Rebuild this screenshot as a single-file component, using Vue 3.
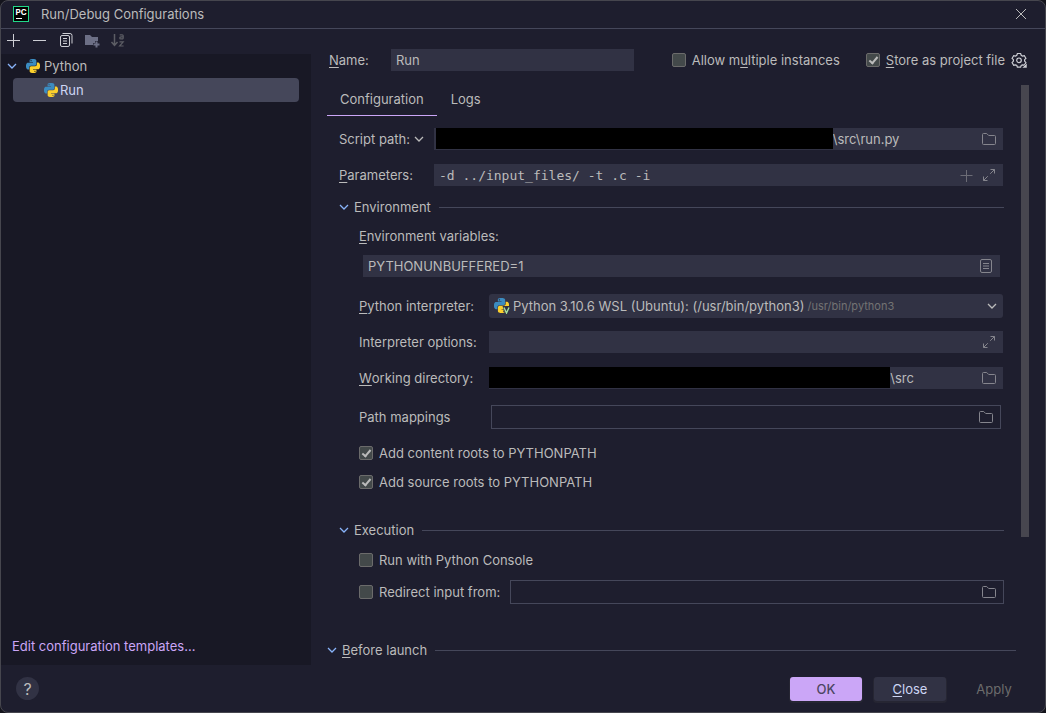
<script setup>
import { ref } from 'vue'

const name = ref('Run')
const tab = ref('Configuration')
const tabs = ['Configuration', 'Logs']
const scriptPath = ref('\\src\\run.py')
const parameters = ref('-d ../input_files/ -t .c -i')
const envVars = ref('PYTHONUNBUFFERED=1')
const interpreterOptions = ref('')
const workingDir = ref('\\src')
const pathMappings = ref('')
const redirectFile = ref('')
const allowMultiple = ref(false)
const storeAsFile = ref(true)
const contentRoots = ref(true)
const sourceRoots = ref(true)
const pythonConsole = ref(false)
const redirectInput = ref(false)
</script>

<template>
  <svg class="symbols" aria-hidden="true">
    <symbol id="python" viewBox="0 0 24 24">
      <path class="py-blue" d="M14.25.18l.9.2.73.26.59.3.45.32.34.34.25.34.16.33.1.3.04.26.02.2-.01.13V8.5l-.05.63-.13.55-.21.46-.26.38-.3.31-.33.25-.35.19-.35.14-.33.1-.3.07-.26.04-.21.02H8.77l-.69.05-.59.14-.5.22-.41.27-.33.32-.27.35-.2.36-.15.37-.1.35-.07.32-.04.27-.02.21v3.06H3.17l-.21-.03-.28-.07-.32-.12-.35-.18-.36-.26-.36-.36-.35-.46-.32-.59-.28-.73-.21-.88-.14-1.05-.05-1.23.06-1.22.16-1.04.24-.87.32-.71.36-.57.4-.44.42-.33.42-.24.4-.16.36-.1.32-.05.24-.01h.16l.06.01h8.16v-.83H6.18l-.01-2.75-.02-.37.05-.34.11-.31.17-.28.25-.26.31-.23.38-.2.44-.18.51-.15.58-.12.64-.1.71-.06.77-.04.84-.02 1.27.05zm-6.3 1.98l-.23.33-.08.41.08.41.23.34.33.22.41.09.41-.09.33-.22.23-.34.08-.41-.08-.41-.23-.33-.33-.22-.41-.09-.41.09z" />
      <path class="py-yellow" d="M21.1 6.11l.28.06.32.12.35.18.36.27.36.35.35.47.32.59.28.73.21.88.14 1.04.05 1.23-.06 1.23-.16 1.04-.24.86-.32.71-.36.57-.4.45-.42.33-.42.24-.4.16-.36.09-.32.05-.24.02-.16-.01h-8.22v.82h5.84l.01 2.76.02.36-.05.34-.11.31-.17.29-.25.25-.31.24-.38.2-.44.17-.51.15-.58.13-.64.09-.71.07-.77.04-.84.01-1.27-.04-1.07-.14-.9-.2-.73-.25-.59-.3-.45-.33-.34-.34-.25-.34-.16-.33-.1-.3-.04-.25-.02-.2.01-.13v-5.34l.05-.64.13-.54.21-.46.26-.38.3-.32.33-.24.35-.2.35-.14.33-.1.3-.06.26-.04.21-.02.13-.01h5.84l.69-.05.59-.14.5-.21.41-.28.33-.32.27-.35.2-.36.15-.36.1-.35.07-.32.04-.28.02-.21V6.07h2.09l.14.01zm-6.47 14.25l-.23.33-.08.41.08.41.23.33.33.23.41.08.41-.08.33-.23.23-.33.08-.41-.08-.41-.23-.33-.33-.23-.41-.08-.41.08z" />
    </symbol>
    <symbol id="folder" viewBox="0 0 16 16">
      <path d="M1.500 3.500a1 1 0 0 1 1-1h3.200l2 2h5.800a1 1 0 0 1 1 1v7a1 1 0 0 1-1 1h-11a1 1 0 0 1-1-1z" fill="none" stroke="currentColor" />
    </symbol>
    <symbol id="expand" viewBox="0 0 16 16">
      <path d="M9.500 2.500h4v4M13.500 2.500L9.200 6.800M6.500 13.500h-4v-4M2.500 13.500L6.800 9.200" fill="none" stroke="currentColor" />
    </symbol>
    <symbol id="chevron" viewBox="0 0 10 10">
      <path d="M1 3l4 4 4-4" fill="none" stroke="currentColor" stroke-width="1.3" />
    </symbol>
  </svg>

  <div class="window">
    <header class="titlebar">
      <svg class="logo" viewBox="0 0 16 16" aria-hidden="true">
        <rect x=".5" y=".5" width="15" height="15" fill="#000" stroke="#21d789" />
        <text x="2.500" y="8.800" class="logo-text">PC</text>
        <path d="M3 12.500h6" stroke="#fff" />
      </svg>
      <h1>Run/Debug Configurations</h1>
      <button class="icon-btn close" aria-label="Close window">
        <svg viewBox="0 0 16 16"><path d="M3 3l10 10M13 3L3 13" fill="none" stroke="currentColor" /></svg>
      </button>
    </header>

    <div class="body">
      <aside class="sidebar">
        <div class="toolbar">
          <button class="icon-btn" aria-label="Add configuration">
            <svg viewBox="0 0 16 16"><path d="M8.500 2v13M2 8.500h13" stroke="currentColor" /></svg>
          </button>
          <button class="icon-btn" aria-label="Remove configuration">
            <svg viewBox="0 0 16 16"><path d="M2 8.500h13" stroke="currentColor" /></svg>
          </button>
          <button class="icon-btn copy" aria-label="Copy configuration">
            <svg viewBox="0 0 16 16" fill="none" stroke="currentColor">
              <path d="M4.500 1.500h7.500a2 2 0 0 1 2 2v8" />
              <rect x="2.500" y="3.500" width="9" height="11" rx="1.500" />
              <path d="M5 6.500h4M5 9h4M5 11.500h4" />
            </svg>
          </button>
          <button class="icon-btn folder-add" aria-label="Create folder" disabled>
            <svg viewBox="0 0 16 16" fill="currentColor">
              <path d="M1 3h5l2 2h6v4h-3v2H9v2H1z" />
              <path d="M11.500 9.500h2v2h2v2h-2v2h-2v-2h-2v-2h2z" />
            </svg>
          </button>
          <button class="icon-btn sort" aria-label="Sort configurations" disabled>
            <svg viewBox="0 0 16 16" fill="none" stroke="currentColor">
              <path d="M4.500 2v11M1.500 10l3 3.300 3-3.300" stroke-width="1.500" />
              <path d="M9.700 2.800h2.500q1 0 1 1v3M13.200 4.900h-2.200q-1.300 0-1.300 1t1.300 1h2.200M9.500 9.800h3.700l-3.600 4.200h4" stroke-width="1.200" />
            </svg>
          </button>
        </div>
        <div class="tree" role="tree">
          <div class="node" role="treeitem" aria-expanded="true">
            <svg class="chevron blue"><use href="#chevron" /></svg>
            <svg class="py"><use href="#python" /></svg>
            <span>Python</span>
          </div>
          <div class="node child selected" role="treeitem" aria-selected="true">
            <svg class="py"><use href="#python" /></svg>
            <span>Run</span>
          </div>
          <a class="templates" href="#templates">Edit configuration templates...</a>
        </div>
      </aside>

      <main class="editor">
        <div class="name-row">
          <label class="name-label" for="name"><u>N</u>ame:</label>
          <div class="field name-field"><input id="name" v-model="name" type="text"></div>
          <label class="check allow"><input v-model="allowMultiple" type="checkbox"><span>Allow m<u>u</u>ltiple instances</span></label>
          <label class="check"><input v-model="storeAsFile" type="checkbox"><span><u>S</u>tore as project file</span></label>
          <button class="icon-btn gear" aria-label="Project file options">
            <svg viewBox="0 0 16 16" fill="none" stroke="currentColor">
              <path d="M6.400 1.500h3.200l.6 1.800 1.200.7 1.900-.4 1.600 2.700-1.300 1.400v1.400l1.300 1.400-1.600 2.700-1.900-.4-1.200.7-.6 1.700H6.400l-.6-1.700-1.200-.7-1.900.4-1.600-2.700 1.300-1.400V7.700L1.100 6.300l1.600-2.700 1.900.4 1.200-.7z" stroke-width="1.200" />
              <circle cx="8" cy="8.300" r="2.300" stroke-width="1.200" />
              <path d="M16 11v5h-5z" fill="currentColor" stroke="#1e1e2e" stroke-width=".5" />
            </svg>
          </button>
        </div>

        <div class="scroll">
          <div class="form">
            <div class="tabs" role="tablist">
              <button v-for="t in tabs" :key="t" role="tab" class="tab" :class="{ active: t === tab }" :aria-selected="t === tab" @click="tab = t">{{ t }}</button>
            </div>

            <div class="row top">
              <label class="label" for="script">Script path:<svg class="chevron grey"><use href="#chevron" /></svg></label>
              <div class="field script">
                <span class="redacted" />
                <input id="script" v-model="scriptPath" type="text">
                <button class="icon-btn dim" aria-label="Browse script"><svg><use href="#folder" /></svg></button>
              </div>
            </div>
            <div class="row top">
              <label class="label" for="params"><u>P</u>arameters:</label>
              <div class="field">
                <input id="params" v-model="parameters" class="mono" type="text">
                <button class="icon-btn faint" aria-label="Insert macro"><svg viewBox="0 0 16 16"><path d="M8.500 3v12M2.500 8.500h12" stroke="currentColor" /></svg></button>
                <button class="icon-btn dim" aria-label="Expand parameters"><svg><use href="#expand" /></svg></button>
              </div>
            </div>

            <section class="environment">
              <h2 class="group"><svg class="chevron blue"><use href="#chevron" /></svg><span>Environment</span></h2>
              <div class="group-body">
                <label class="env-label" for="env"><u>E</u>nvironment variables:</label>
                <div class="field env-field">
                  <input id="env" v-model="envVars" type="text">
                  <button class="icon-btn dim" aria-label="Edit variables">
                    <svg viewBox="0 0 16 16" fill="none" stroke="currentColor"><rect x="2.500" y="1.500" width="11" height="13" rx="1.500" /><path d="M5 5.500h6M5 8h6M5 10.500h6" /></svg>
                  </button>
                </div>
                <div class="row">
                  <label class="label" for="interpreter"><u>P</u>ython interpreter:</label>
                  <div class="field combo">
                    <svg class="py-env" viewBox="0 0 16 16">
                      <use href="#python" width="15" height="15" />
                      <path d="M8.500 8h7.500v8h-5z" fill="#313244" />
                      <path d="M10 9.500l2.500 5.500 2.500-5.500" fill="none" stroke="#a6e3a1" stroke-width="1.400" />
                    </svg>
                    <select id="interpreter"><option>Python 3.10.6 WSL (Ubuntu): (/usr/bin/python3)</option></select>
                    <span class="hint">/usr/bin/python3</span>
                    <svg class="chevron"><use href="#chevron" /></svg>
                  </div>
                </div>
                <div class="row">
                  <label class="label" for="options">Interpreter options:</label>
                  <div class="field">
                    <input id="options" v-model="interpreterOptions" type="text">
                    <button class="icon-btn dim" aria-label="Expand options"><svg><use href="#expand" /></svg></button>
                  </div>
                </div>
                <div class="row">
                  <label class="label" for="workdir"><u>W</u>orking directory:</label>
                  <div class="field workdir">
                    <span class="redacted" />
                    <input id="workdir" v-model="workingDir" type="text">
                    <button class="icon-btn dim" aria-label="Browse directory"><svg><use href="#folder" /></svg></button>
                  </div>
                </div>
                <div class="row mappings">
                  <label class="label" for="mappings">Path mappings</label>
                  <div class="field outline">
                    <input id="mappings" v-model="pathMappings" type="text">
                    <button class="icon-btn dim" aria-label="Edit mappings"><svg><use href="#folder" /></svg></button>
                  </div>
                </div>
                <label class="check line"><input v-model="contentRoots" type="checkbox"><span>Add content roots to PYTHONPATH</span></label>
                <label class="check line"><input v-model="sourceRoots" type="checkbox"><span>Add source roots to PYTHONPATH</span></label>
              </div>
            </section>

            <section class="execution">
              <h2 class="group"><svg class="chevron blue"><use href="#chevron" /></svg><span>Execution</span></h2>
              <div class="group-body">
                <label class="check console"><input v-model="pythonConsole" type="checkbox"><span>Run with Python Console</span></label>
                <div class="redirect">
                  <label class="check"><input v-model="redirectInput" type="checkbox"><span>Redirect input from:</span></label>
                  <div class="field outline">
                    <input v-model="redirectFile" type="text" aria-label="Input file">
                    <button class="icon-btn dim" aria-label="Browse input file"><svg><use href="#folder" /></svg></button>
                  </div>
                </div>
              </div>
            </section>

            <h2 class="group before"><svg class="chevron blue"><use href="#chevron" /></svg><span><u>B</u>efore launch</span></h2>
          </div>
          <div class="scrollbar"><div class="thumb" /></div>
        </div>
      </main>
    </div>

    <footer class="footer">
      <button class="help" aria-label="Help">?</button>
      <button class="btn primary">OK</button>
      <button class="btn"><u>C</u>lose</button>
      <button class="btn flat" disabled>Apply</button>
    </footer>
  </div>
</template>

<style>
body {
  background: #14141c;
}
</style>

<style scoped>
.symbols {
  position: absolute;
  width: 0;
  height: 0;
}
.py-blue { fill: #3c8cc0; }
.py-yellow { fill: #fcd02c; }

.window {
  box-sizing: border-box;
  min-height: 100vh;
  display: flex;
  flex-direction: column;
  border: 1px solid #46464e;
  border-radius: 8px;
  overflow: hidden;
  background: #1e1e2e;
  color: #bbbbbb;
  font: 13px/16px Inter, "Noto Sans", sans-serif;
}
.window * { box-sizing: border-box; }
button, input, select {
  font: inherit;
  color: inherit;
  border: 0;
  margin: 0;
  padding: 0;
  background: none;
}
u {
  text-decoration-thickness: 1px;
  text-underline-offset: 2px;
}
h1, h2 {
  margin: 0;
  font: inherit;
}
svg { display: block; flex: none; }
.icon-btn { flex: none; width: 16px; height: 16px; }
.icon-btn svg { width: 16px; height: 16px; }
.dim { color: #85858d; }
.faint { color: #6c6c76; }
.chevron { width: 10px; height: 10px; }
.blue { color: #89b4fa; }

.titlebar {
  display: flex;
  align-items: center;
  height: 28px;
  padding: 0 16px 1px 12px;
  border-bottom: 1px solid #45475a;
}
.logo { width: 16px; height: 16px; }
.logo-text {
  font: bold 8px Inter, sans-serif;
  fill: #fff;
}
h1 { flex: 1; margin-left: 12px; }

.body { flex: 1; display: flex; }
.sidebar {
  width: 310px;
  flex: none;
  display: flex;
  flex-direction: column;
}
.toolbar {
  display: flex;
  align-items: center;
  gap: 10px;
  height: 25px;
  padding: 0 0 3px 4px;
  color: #cdced4;
}
.copy { margin-left: 1px; }
.folder-add { color: #6c6f85; }
.sort { color: #5c5d64; }
.tree {
  flex: 1;
  display: flex;
  flex-direction: column;
  background: #181825;
}
.node {
  display: flex;
  align-items: center;
  height: 24px;
  padding-left: 6px;
}
.py { width: 14px; height: 14px; margin-left: 9px; margin-right: 4px; }
.child {
  margin: 0 12px;
  padding-left: 22px;
  border-radius: 4px;
  background: #45475a;
  color: #cdd6f4;
}
.child .py { margin-right: 2px; }
.templates {
  margin: auto 0 11px 11px;
  color: #cba6f7;
  text-decoration: none;
}

.editor {
  flex: 1;
  min-width: 0;
  display: flex;
  flex-direction: column;
  padding: 20px 16px 0;
}
.name-row { display: flex; align-items: center; height: 22px; padding-left: 2px; }
.name-label { width: 62px; flex: none; }
.field {
  flex: 1;
  min-width: 0;
  display: flex;
  align-items: center;
  gap: 7px;
  height: 22px;
  padding-right: 6px;
  background: #313244;
}
.field input {
  flex: 1;
  width: 0;
  min-width: 0;
  height: 100%;
  padding-left: 5px;
  outline: none;
}
.name-field { flex: 0 1 243px; margin-right: auto; }
.check { display: inline-flex; align-items: center; gap: 6px; white-space: nowrap; }
.check input {
  appearance: none;
  flex: none;
  width: 14px;
  height: 14px;
  border: 1px solid #6b6b6b;
  border-radius: 2px;
  background: #43494a;
}
.check input:checked {
  position: relative;
}
.check input:checked::after {
  content: "";
  position: absolute;
  left: 4px;
  top: 1px;
  width: 5px;
  height: 9px;
  box-sizing: border-box;
  border: solid #bbbbbb;
  border-width: 0 2px 2px 0;
  transform: rotate(40deg);
}
.allow { margin-right: 26px; }
.gear { margin-left: 6px; margin-right: 2px; color: #cdced4; }

.scroll { flex: 1; display: flex; margin-top: 14px; }
.form { flex: 1; min-width: 0; }
.scrollbar { flex: none; width: 8px; margin-left: 6px; }
.thumb { height: 78%; background: #47464f; }

.tabs { display: flex; gap: 1px; height: 31px; margin-bottom: 12px; }
.tab { height: 31px; padding: 0 13px 2px; border-bottom: 1px solid transparent; }
.tab.active { border-bottom-color: #cba6f7; }

.row { display: flex; align-items: center; margin-bottom: 14px; }
.row .label { flex: none; width: 130px; display: flex; align-items: center; }
.row.top { padding-left: 12px; margin-right: 12px; }
.row.top .label { width: 95px; }
.label u { white-space: pre; }
.grey { margin-left: 4px; }
.mono { font: 13px/16px "DejaVu Sans Mono", monospace; }
.redacted { flex: none; background: #000; height: 21px; align-self: flex-start; }
.script .redacted { width: calc(71% - 3px); margin-left: 2px; }
.workdir .redacted { width: 79%; }
.redacted + input { padding-left: 0; margin-left: -7px; }

.environment { margin-top: -1px; }
.group { display: flex; align-items: center; gap: 5px; height: 16px; margin: 0 11px 0 12px; }
.group::after { content: ""; flex: 1; height: 1px; margin-left: 3px; background: #45475a; }
.group-body { margin: 0 12px 0 32px; }
.env-label { display: block; margin: 13px 0 11px; }
.env-field { margin: 0 3px 18px 4px; padding-right: 6px; }
.combo { height: 24px; margin: -1px 0; border-radius: 3px; gap: 3px; padding-left: 5px; }
.py-env { width: 16px; height: 16px; }
.combo select { appearance: none; field-sizing: content; outline: none; }
.hint { flex: 1; font-size: 11px; color: #737373; }
.outline { height: 24px; border: 1px solid #45475a; background: none; }
.mappings { margin: 16px 2px 16px 0; }
.mappings .label { width: 132px; }
.check.line { display: flex; height: 16px; margin-bottom: 13px; }
.execution { margin-top: 32px; }
.check.console { display: flex; height: 16px; margin: 14px 0 12px; }
.redirect { display: flex; align-items: center; gap: 10px; margin-right: -1px; }
.group.before { margin: 38px -1px 6px 0; }

.footer {
  display: flex;
  align-items: center;
  gap: 12px;
  height: 47px;
  padding: 0 15px;
}
.help {
  width: 23px;
  height: 23px;
  margin-right: auto;
  border-radius: 50%;
  background: #313244;
  font-size: 16px;
}
.btn {
  width: 72px;
  height: 24px;
  border-radius: 3px;
  background: #313244;
  color: #cdd6f4;
  box-shadow: 0 1px 0 1px #262633;
}
.primary { background: #cba6f7; color: #4c4662; font-weight: 500; }
.flat { background: none; box-shadow: none; color: #6c6c6c; }
</style>
